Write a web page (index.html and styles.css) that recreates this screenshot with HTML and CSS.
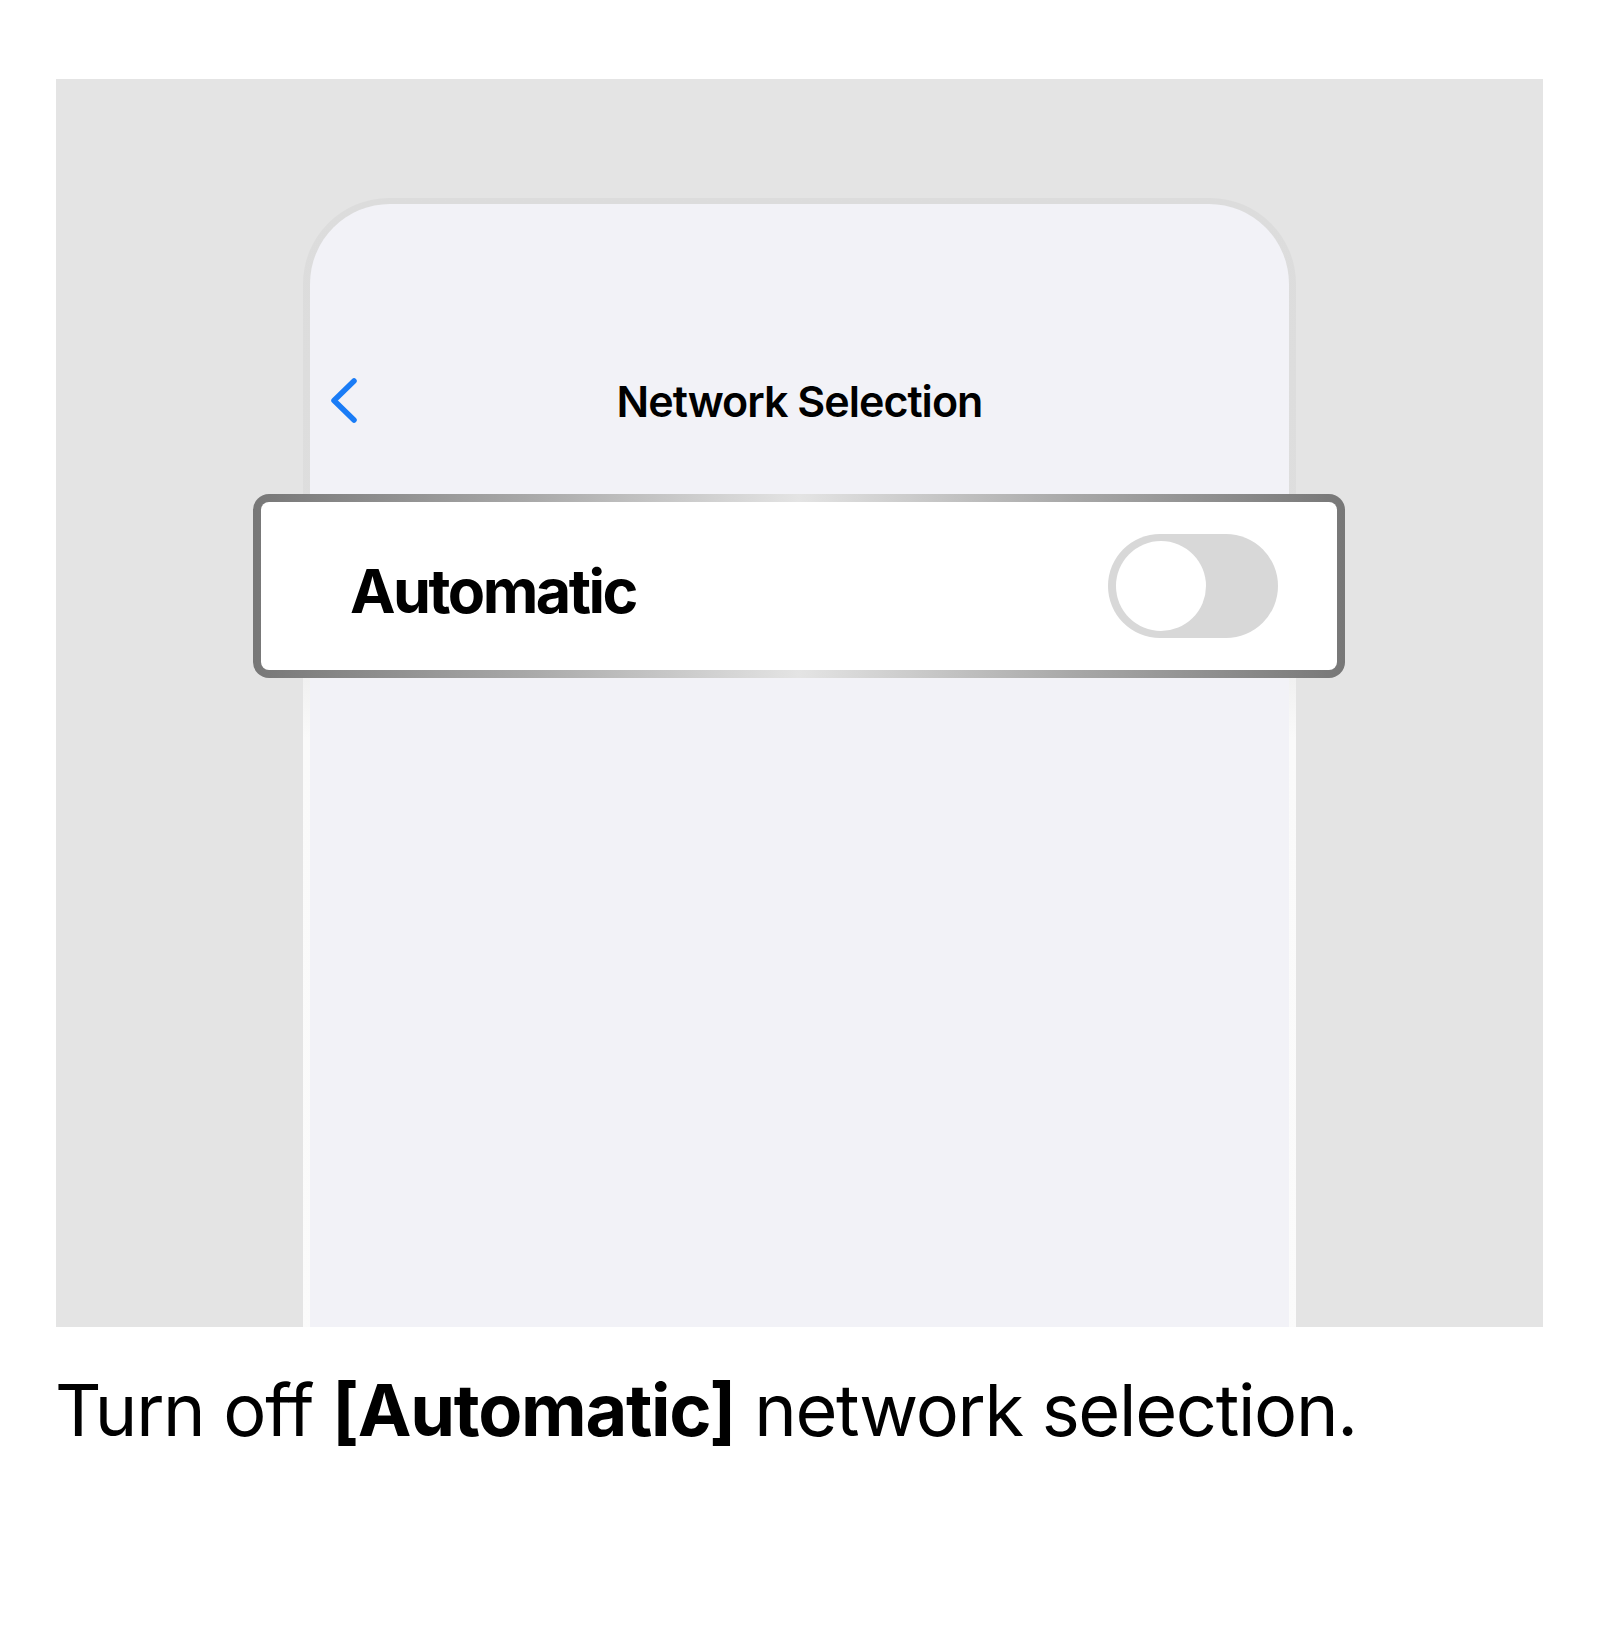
FILE: index.html
```html
<!DOCTYPE html>
<html lang="en">
<head>
  <meta charset="UTF-8" />
  <title>Network Selection</title>
  <link rel="stylesheet" href="styles.css">
</head>
<body>
  <main class="step">
    <!-- screenshot area -->
    <div class="stage">
      <div class="phone">
        <div class="phone-screen">
          <div class="navbar">
            <svg class="back" width="30" height="48" viewBox="0 0 30 48">
              <polyline points="24,4 4,23.5 24,43" fill="none" stroke="#1a7cf6" stroke-width="5.5" stroke-linecap="round" stroke-linejoin="round"/>
            </svg>
            <h1>Network Selection</h1>
          </div>

          <div class="callout">
            <span class="label">Automatic</span>
            <div class="toggle"><div class="knob"></div></div>
          </div>
        </div>
      </div>
    </div>

    <p class="caption">Turn off <strong>[Automatic]</strong> network selection.</p>
  </main>
</body>
</html>
```

FILE: styles.css
```css
body {
  margin: 0;
  background: #fff;
  font-family: Inter, "Noto Sans", sans-serif;
  color: #000;
}
.step {
  padding: 79px 57px 0 56px;
}
.stage {
  height: 1248px;
  background: #e4e4e4;
  overflow: hidden;
  padding-top: 119px;
  box-sizing: border-box;
}
.phone {
  width: 993px;
  height: 1200px;
  margin-left: 247px;
  box-sizing: border-box;
  padding: 6px 7px 0 7px;
  border-radius: 86px 86px 0 0;
  background: linear-gradient(#dcdcdc, #dedede 30%, #fafafa 45%, #fbfbfb);
}
.phone-screen {
  height: 100%;
  background: #f2f2f7;
  border-radius: 80px 80px 0 0;
}
.navbar {
  position: relative;
  height: 80px;
  padding-top: 157px;
  display: flex;
  align-items: center;
  justify-content: center;
}
.back {
  position: absolute;
  left: 20px;
  top: 173px;
}
.navbar h1 {
  margin: 0;
  font-size: 43px;
  font-weight: 600;
  letter-spacing: -1px;
}
.callout {
  margin: 53px -56px 0 -57px;
  height: 184px;
  box-sizing: border-box;
  border: 8px solid transparent;
  border-radius: 16px;
  background:
    linear-gradient(#fff, #fff) padding-box,
    linear-gradient(90deg, #777 0%, #a8a8a8 25%, #e4e4e4 50%, #a8a8a8 75%, #777 100%) border-box;
  display: flex;
  align-items: center;
  justify-content: space-between;
  padding: 0 59px 0 89px;
}
.label {
  margin-top: 9px;
  font-size: 61px;
  font-weight: 700;
  letter-spacing: -2.5px;
}
.toggle {
  width: 170px;
  height: 104px;
  border-radius: 52px;
  background: #d8d8d8;
  padding: 7px 8px;
  box-sizing: border-box;
}
.knob {
  width: 90px;
  height: 90px;
  border-radius: 50%;
  background: #fff;
}
.caption {
  margin: 40px 0 0 -1px;
  font-size: 72px;
  font-weight: 400;
  line-height: 1.2;
  letter-spacing: -1.3px;
}
.caption strong {
  font-weight: 700;
}
```
